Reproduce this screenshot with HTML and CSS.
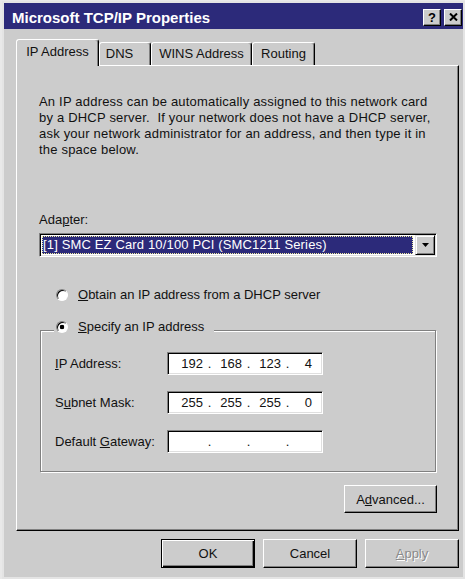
FILE: index.html
```html
<!DOCTYPE html>
<html>
<head>
<meta charset="utf-8">
<title>Microsoft TCP/IP Properties</title>
<link rel="stylesheet" href="styles.css">
</head>
<body>
<div class="dialog">
  <div class="titlebar">
    <span class="title">Microsoft TCP/IP Properties</span>
    <div class="caption-btns">
      <span class="cbtn">?</span>
      <span class="cbtn"><svg width="9" height="8" viewBox="0 0 9 8"><path d="M1 0.5 L8 7.5 M8 0.5 L1 7.5" stroke="#000" stroke-width="2" fill="none"/></svg></span>
    </div>
  </div>
  <div class="client">
    <div class="tabs">
      <div class="tab active t-ip">IP Address</div>
      <div class="tab t-dns">DNS</div>
      <div class="tab t-wins">WINS Address</div>
      <div class="tab t-routing">Routing</div>
    </div>
    <div class="page">
      <p class="intro">An IP address can be automatically assigned to this network card<br>by a DHCP server.&nbsp; If your network does not have a DHCP server,<br>ask your network administrator for an address, and then type it in<br>the space below.</p>
      <div class="field-label">Ada<u>p</u>ter:</div>
      <div class="combo">
        <div class="combo-value"><span class="sel">[1] SMC EZ Card 10/100 PCI (SMC1211 Series)</span></div>
        <div class="combo-btn"><svg width="7" height="4" viewBox="0 0 7 4"><path d="M0 0H7L3.5 4Z" fill="#000"/></svg></div>
      </div>
      <div class="radio-row obtain"><span class="radio"></span><span><u>O</u>btain an IP address from a DHCP server</span></div>
      <fieldset class="group">
        <legend class="radio-row"><span class="radio checked"></span><span><u>S</u>pecify an IP address</span></legend>
        <div class="ip-grid">
          <span class="ip-label"><u>I</u>P Address:</span>
          <div class="ip-box"><span class="seg">192</span><span class="dot">.</span><span class="seg">168</span><span class="dot">.</span><span class="seg">123</span><span class="dot">.</span><span class="seg last">4</span></div>
          <span class="ip-label">S<u>u</u>bnet Mask:</span>
          <div class="ip-box"><span class="seg">255</span><span class="dot">.</span><span class="seg">255</span><span class="dot">.</span><span class="seg">255</span><span class="dot">.</span><span class="seg last">0</span></div>
          <span class="ip-label">Default <u>G</u>ateway:</span>
          <div class="ip-box"><span class="seg"></span><span class="dot">.</span><span class="seg"></span><span class="dot">.</span><span class="seg"></span><span class="dot">.</span><span class="seg last"></span></div>
        </div>
      </fieldset>
      <div class="adv-row"><button class="btn adv">A<u>d</u>vanced...</button></div>
    </div>
    <div class="actions">
      <button class="btn default">OK</button>
      <button class="btn">Cancel</button>
      <button class="btn disabled"><u>A</u>pply</button>
    </div>
  </div>
</div>
</body>
</html>
```
FILE: styles.css
```css
* { box-sizing: border-box; }
html, body { margin: 0; }
body {
  padding: 1px 0 0 2px;
  background: #e9e9e9;
  font-family: "Liberation Sans", Arial, sans-serif;
  font-size: 13px;
  color: #111;
}
.dialog {
  width: 463px;
  border: 2px solid #e4e4e4;
  background: #cccccc;
}
.titlebar {
  height: 26px;
  background: #2c2a7a;
  color: #fff;
  display: flex;
  align-items: center;
  justify-content: space-between;
  padding: 2px 1px 0 8px;
}
.title { font-weight: bold; font-size: 15px; }
.caption-btns { display: flex; gap: 3px; }
.cbtn {
  width: 18px;
  height: 17px;
  background: #ccc;
  border: 1px solid;
  border-color: #fff #000 #000 #fff;
  box-shadow: inset -1px -1px 0 #808080;
  display: flex;
  align-items: center;
  justify-content: center;
  color: #000;
  font-weight: bold;
  font-size: 13px;
  line-height: 1;
}
.client { padding: 10px 4px 9px 12px; }
.tabs { display: flex; align-items: flex-start; }
.tab {
  height: 23px;
  margin-top: 3px;
  border: 1px solid;
  border-bottom: 0;
  border-color: #fff #000 transparent #fff;
  box-shadow: inset -1px 0 0 #808080;
  border-radius: 3px 3px 0 0;
  text-align: center;
  line-height: 16px;
  padding-top: 3px;
  background: #ccc;
  white-space: nowrap;
}
.tab.active {
  height: 27px;
  margin-top: 0;
  margin-bottom: -1px;
  position: relative;
  z-index: 1;
  padding-top: 4px;
}
.t-ip { width: 83px; }
.t-dns { width: 52px; padding-right: 11px; }
.t-wins { width: 101px; }
.t-routing { width: 63px; }
.page {
  border: 1px solid;
  border-color: #fff #000 #000 #fff;
  box-shadow: inset -1px -1px 0 #808080;
  padding: 28px 21px 17px 22px;
}
.intro { margin: 0; line-height: 16px; white-space: nowrap; letter-spacing: 0.2px; }
.field-label { margin-top: 54px; line-height: 16px; }
.combo {
  margin-top: 5px;
  height: 24px;
  display: flex;
  border: 1px solid;
  border-color: #808080 #fff #fff #808080;
  box-shadow: inset 1px 1px 0 #000, inset -1px -1px 0 #dfdfdf;
  background: #fff;
  padding: 1px;
}
.combo-value { flex: 1; padding: 1px 2px 1px 1px; min-width: 0; }
.sel {
  display: block;
  height: 100%;
  background: #2c2a7a;
  color: #fff;
  border: 1px dotted #f0eca0;
  line-height: 16px;
  white-space: nowrap;
  overflow: hidden;
  letter-spacing: 0.15px;
}
.combo-btn {
  width: 20px;
  height: 20px;
  flex: none;
  background: #ccc;
  border: 1px solid;
  border-color: #dfdfdf #000 #000 #dfdfdf;
  box-shadow: inset 1px 1px 0 #fff, inset -1px -1px 0 #808080;
  display: flex;
  align-items: center;
  justify-content: center;
}
.radio-row { display: flex; align-items: center; line-height: 16px; }
.obtain { margin-top: 30px; margin-left: 17px; }
.radio {
  width: 12px;
  height: 12px;
  flex: none;
  border-radius: 50%;
  border: 1px solid;
  border-color: #808080 #fff #fff #808080;
  box-shadow: inset 1px 1px 0 #000;
  background: #fff;
  margin-right: 10px;
}
.radio.checked { background: radial-gradient(circle, #000 0 2px, #fff 2.6px); }
.group {
  margin: 16px 1px 0 1px;
  border: 1px solid #808080;
  box-shadow: 1px 1px 0 #fff, inset 1px 1px 0 #fff;
  padding: 11px 0 18px 14px;
  min-width: 0;
}
.group legend {
  padding: 0 10px 6px 2px;
  margin-left: -1px;
  background: #ccc;
}
.ip-grid {
  display: grid;
  grid-template-columns: 112px 156px;
  row-gap: 16px;
  align-items: center;
}
.ip-label { white-space: nowrap; line-height: 16px; }
.ip-box {
  height: 23px;
  border: 1px solid;
  border-color: #808080 #fff #fff #808080;
  box-shadow: inset 1px 1px 0 #000, inset -1px -1px 0 #dfdfdf;
  background: #fff;
  display: flex;
  padding-left: 9px;
  line-height: 21px;
}
.seg { width: 26px; text-align: right; }
.seg.last { width: 18px; }
.dot { width: 13px; text-align: center; }
.adv-row { margin-top: 13px; display: flex; justify-content: flex-end; }
.btn {
  font: inherit;
  color: #111;
  background: #ccc;
  border: 1px solid;
  border-color: #fff #000 #000 #fff;
  box-shadow: inset -1px -1px 0 #808080;
  padding: 0;
  height: 29px;
  width: 94px;
}
.btn.adv { width: 93px; height: 28px; }
.actions { margin-top: 8px; display: flex; justify-content: flex-end; gap: 8px; }
.btn.default {
  border-color: #000;
  box-shadow: inset 1px 1px 0 #fff, inset -1px -1px 0 #000, inset -2px -2px 0 #808080;
}
.btn.disabled { color: #8a8a8a; text-shadow: 1px 1px 0 #fff; }
```
